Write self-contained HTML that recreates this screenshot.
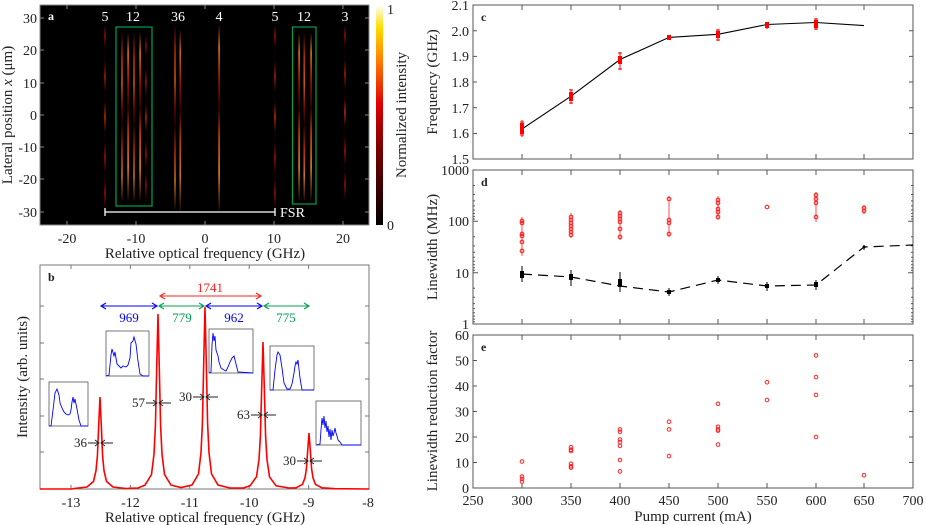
<!DOCTYPE html>
<html><head><meta charset="utf-8"><style>
html,body{margin:0;padding:0;background:#fff;}
svg{display:block;font-family:"Liberation Serif",serif;}
</style></head><body>
<svg width="926" height="525" viewBox="0 0 926 525" xmlns="http://www.w3.org/2000/svg">
<defs>
<linearGradient id="cb" x1="0" y1="1" x2="0" y2="0">
<stop offset="0" stop-color="#000"/><stop offset="0.35" stop-color="#7a0000"/><stop offset="0.55" stop-color="#e00000"/><stop offset="0.75" stop-color="#ff8000"/><stop offset="0.9" stop-color="#ffe000"/><stop offset="1" stop-color="#fff"/>
</linearGradient>
<linearGradient id="s1" x1="0" y1="0" x2="0" y2="1">
<stop offset="0" stop-color="#000"/><stop offset="0.06" stop-color="#b01000"/><stop offset="0.12" stop-color="#100"/><stop offset="0.2" stop-color="#100"/><stop offset="0.28" stop-color="#c02000"/><stop offset="0.36" stop-color="#100"/><stop offset="0.42" stop-color="#100"/><stop offset="0.5" stop-color="#d83000"/><stop offset="0.58" stop-color="#100"/><stop offset="0.64" stop-color="#100"/><stop offset="0.72" stop-color="#c01000"/><stop offset="0.8" stop-color="#100"/><stop offset="0.84" stop-color="#100"/><stop offset="0.91" stop-color="#b01000"/><stop offset="1" stop-color="#000"/>
</linearGradient>
<linearGradient id="s2" x1="0" y1="0" x2="0" y2="1">
<stop offset="0" stop-color="#100"/><stop offset="0.15" stop-color="#d03000"/><stop offset="0.3" stop-color="#e06010"/><stop offset="0.45" stop-color="#800000"/><stop offset="0.55" stop-color="#200"/><stop offset="0.7" stop-color="#d03000"/><stop offset="0.85" stop-color="#e08020"/><stop offset="1" stop-color="#200"/>
</linearGradient>
<linearGradient id="s3" x1="0" y1="0" x2="0" y2="1">
<stop offset="0" stop-color="#100"/><stop offset="0.12" stop-color="#e07010"/><stop offset="0.3" stop-color="#a01000"/><stop offset="0.45" stop-color="#300"/><stop offset="0.6" stop-color="#d04000"/><stop offset="0.8" stop-color="#e08020"/><stop offset="1" stop-color="#100"/>
</linearGradient>
</defs>

<!-- ===== Panel a ===== -->
<rect x="40" y="5" width="329" height="220" fill="#000"/>
<g>
<rect x="104.3" y="25" width="1.4" height="184" fill="url(#s1)"/>
<rect x="121.3" y="33" width="1.4" height="168" fill="url(#s2)"/>
<rect x="127.3" y="33" width="1.6" height="168" fill="url(#s3)"/>
<rect x="133.3" y="33" width="1.4" height="168" fill="url(#s2)"/>
<rect x="139.3" y="33" width="1.6" height="168" fill="url(#s3)"/>
<rect x="145.3" y="36" width="1.3" height="164" fill="url(#s1)"/>
<rect x="174.3" y="25" width="1.4" height="184" fill="url(#s2)"/>
<rect x="179.5" y="30" width="1.4" height="182" fill="url(#s3)"/>
<rect x="218.3" y="25" width="1.6" height="186" fill="url(#s3)"/>
<rect x="274.3" y="25" width="1.4" height="184" fill="url(#s1)"/>
<rect x="298.3" y="33" width="1.6" height="168" fill="url(#s3)"/>
<rect x="303.5" y="33" width="1.4" height="168" fill="url(#s2)"/>
<rect x="310.3" y="33" width="1.6" height="168" fill="url(#s3)"/>
<rect x="344.3" y="25" width="1.4" height="175" fill="url(#s1)"/>
</g>
<rect x="116" y="27" width="36" height="179" fill="none" stroke="#00a050" stroke-width="1.2"/>
<rect x="292.5" y="27" width="23.5" height="177" fill="none" stroke="#00a050" stroke-width="1.2"/>
<path d="M105,212 H275 M105,208 V216 M275,208 V216" stroke="#fff" stroke-width="1.3" fill="none"/>
<text x="280" y="217" font-size="14" fill="#fff">FSR</text>
<g font-size="14" fill="#fff" text-anchor="middle">
<text x="105" y="21">5</text><text x="133" y="21">12</text><text x="178" y="21">36</text><text x="219" y="21">4</text><text x="275" y="21">5</text><text x="304" y="21">12</text><text x="345" y="21">3</text>
</g>
<text x="48" y="20" font-size="12" font-weight="bold" fill="#fff">a</text>
<rect x="40" y="5" width="329" height="220" fill="none" stroke="#888" stroke-width="1"/>
<g stroke="#888" stroke-width="1">
<path d="M40,18h4M40,50h4M40,83h4M40,115h4M40,147h4M40,179h4M40,212h4M369,18h-4M369,50h-4M369,83h-4M369,115h-4M369,147h-4M369,179h-4M369,212h-4"/>
<path d="M67,225v-4M136,225v-4M205,225v-4M274,225v-4M343,225v-4M67,5v4M136,5v4M205,5v4M274,5v4M343,5v4"/>
</g>
<g font-size="14" fill="#222" text-anchor="end">
<text x="37" y="23">30</text><text x="37" y="55">20</text><text x="37" y="88">10</text><text x="37" y="120">0</text><text x="37" y="152">-10</text><text x="37" y="184">-20</text><text x="37" y="217">-30</text>
</g>
<g font-size="14" fill="#222" text-anchor="middle">
<text x="67" y="243">-20</text><text x="136" y="243">-10</text><text x="205" y="243">0</text><text x="274" y="243">10</text><text x="343" y="243">20</text>
<text x="205" y="258" font-size="15">Relative optical frequency (GHz)</text>
</g>
<text transform="translate(12,115) rotate(-90)" font-size="15" fill="#222" text-anchor="middle">Lateral position <tspan font-style="italic">x</tspan> (μm)</text>
<rect x="376" y="5" width="7" height="220" fill="url(#cb)"/>
<text x="387" y="14" font-size="14" fill="#222">1</text>
<text x="387" y="230" font-size="14" fill="#222">0</text>
<text transform="translate(406,115) rotate(-90)" font-size="15" fill="#222" text-anchor="middle">Normalized intensity</text>

<!-- ===== Panel b ===== -->
<rect x="40" y="265" width="329" height="224" fill="none" stroke="#777" stroke-width="1"/>
<g stroke="#777" stroke-width="1">
<path d="M40,306h4M40,343h4M40,379h4M40,416h4M40,452h4M369,306h-4M369,343h-4M369,379h-4M369,416h-4M369,452h-4"/>
<path d="M71,489v-4M130.4,489v-4M189.8,489v-4M249.2,489v-4M308.6,489v-4M71,265v4M130.4,265v4M189.8,265v4M249.2,265v4M308.6,265v4"/>
</g>
<text x="48" y="281" font-size="12" font-weight="bold" fill="#222">b</text>
<path fill="none" stroke="#ff0000" stroke-width="1.6" d="M40,489 H72 L74,488.5 L87,487 L93.5,481.4 L96,470.6 L97.4,456 L98.7,425.5 L100,397 L101.3,425.5 L102.6,456 L104,470.6 L106.5,481.4 L113,487 L126,488.5 L138,488 L145,485.1 L151.5,474.5 L154,454 L155.4,426 L156.7,368 L158,314 L159.3,368 L160.6,426 L162,454 L164.5,474.5 L171,485.1 L181,487.5 L192,485 L198.5,473.9 L201,452.6 L202.4,423.5 L203.7,363.4 L205,307 L206.3,363.4 L207.6,423.5 L209,452.6 L211.5,473.9 L218,485 L230,488 L243,488.1 L250,485.8 L256.5,476.8 L259,459.6 L260.4,436.1 L261.7,387.6 L263,342 L264.3,387.6 L265.6,436.1 L267,459.6 L269.5,476.8 L276,485.8 L289,488 L296,487.8 L302.5,484.4 L305,477.8 L306.4,468.8 L307.7,450.4 L309,433 L310.3,450.4 L311.6,468.8 L313,477.8 L315.5,484.4 L322,487.8 L335,488.7 L369,489"/>
<path d="M160,296 H261 M165,293 L160,296 L165,299 M256,293 L261,296 L256,299" stroke="#ff2020" stroke-width="1.1" fill="none"/>
<text x="210" y="292" font-size="13" fill="#ff2020" text-anchor="middle">1741</text>
<path d="M101,306 H157 M106,303 L101,306 L106,309 M152,303 L157,306 L152,309" stroke="#0000ff" stroke-width="1.1" fill="none"/>
<path d="M159,306 H204 M164,303 L159,306 L164,309 M199,303 L204,306 L199,309" stroke="#00a050" stroke-width="1.1" fill="none"/>
<path d="M206,306 H262 M211,303 L206,306 L211,309 M257,303 L262,306 L257,309" stroke="#0000ff" stroke-width="1.1" fill="none"/>
<path d="M264,306 H309 M269,303 L264,306 L269,309 M304,303 L309,306 L304,309" stroke="#00a050" stroke-width="1.1" fill="none"/>
<g font-size="13" text-anchor="middle">
<text x="129" y="322" fill="#0000ff">969</text><text x="182" y="322" fill="#00a050">779</text><text x="234" y="322" fill="#0000ff">962</text><text x="286" y="322" fill="#00a050">775</text>
</g>
<g stroke="#222" stroke-width="1" fill="none">
<path d="M88,443 H99 M95,440 L99,443 L95,446 M113,443 H101 M105,440 L101,443 L105,446"/>
<path d="M146,403 H157 M153,400 L157,403 L153,406 M171,403 H159 M163,400 L159,403 L163,406"/>
<path d="M193,397 H204 M200,394 L204,397 L200,400 M218,397 H206 M210,394 L206,397 L210,400"/>
<path d="M251,415 H262 M258,412 L262,415 L258,418 M276,415 H264 M268,412 L264,415 L268,418"/>
<path d="M297,461 H308 M304,458 L308,461 L304,464 M322,461 H310 M314,458 L310,461 L314,464"/>
</g>
<g font-size="13" fill="#222" text-anchor="end">
<text x="87" y="447">36</text><text x="145" y="407">57</text><text x="192" y="401">30</text><text x="250" y="419">63</text><text x="296" y="465">30</text>
</g>
<g fill="#fff" stroke="#555" stroke-width="0.8">
<rect x="49" y="382" width="39" height="44"/>
<rect x="106" y="331" width="43" height="45"/>
<rect x="209" y="329" width="44" height="44"/>
<rect x="270" y="346" width="44" height="44"/>
<rect x="316" y="401" width="45" height="44"/>
</g>
<g fill="none" stroke="#0000ff" stroke-width="0.9">
<polyline points="49,426 51,426 53,410 55,393 57,389 59,395 60,403 62,408 64,412 66,414 68,415 70,414 71,410 72,402 73,397 74,403 75,399 77,409 79,420 81,426 88,426"/>
<polyline points="106,376 109,375 111,355 112,349 114,356 115,352 117,364 119,366 121,368 123,366 126,367 128,365 130,358 131,343 133,341 134,337 136,344 138,361 140,374 143,376 149,376"/>
<polyline points="209,373 211,372 212,345 213,333 214,341 215,336 216,350 218,356 219,362 221,368 224,370 226,371 228,367 230,362 232,358 234,356 236,364 238,372 253,373"/>
<polyline points="270,390 273,390 275,370 277,355 278,352 280,355 282,368 284,383 287,389 290,389 292,384 294,373 295,366 296,362 297,364 298,360 299,369 300,378 302,390 314,390"/>
<polyline points="316,445 320,444 321,430 322,418 323,425 324,416 325,428 326,421 327,432 328,426 329,437 330,429 331,440 332,430 333,436 334,433 335,428 336,433 337,436 338,440 340,442 342,445 361,445"/>
</g>
<g font-size="14" fill="#222" text-anchor="middle">
<text x="71" y="507">-13</text><text x="130.4" y="507">-12</text><text x="189.8" y="507">-11</text><text x="249.2" y="507">-10</text><text x="308.6" y="507">-9</text><text x="368" y="507">-8</text>
<text x="205" y="522" font-size="15">Relative optical frequency (GHz)</text>
</g>
<text transform="translate(27,377) rotate(-90)" font-size="15" fill="#222" text-anchor="middle">Intensity (arb. units)</text>

<!-- ===== Panel c ===== -->
<rect x="473" y="5" width="440" height="154" fill="none" stroke="#555" stroke-width="1"/>
<g stroke="#555" stroke-width="1">
<path d="M473,30.7h4M473,56.4h4M473,82h4M473,107.8h4M473,133.5h4M913,30.7h-4M913,56.4h-4M913,82h-4M913,107.8h-4M913,133.5h-4"/>
<path d="M522,159v-5M571,159v-5M620,159v-5M669,159v-5M718,159v-5M767,159v-5M816,159v-5M864,159v-5M522,5v5M571,5v5M620,5v5M669,5v5M718,5v5M767,5v5M816,5v5M864,5v5"/>
</g>
<text x="481" y="21" font-size="12" font-weight="bold" fill="#222">c</text>
<polyline points="522,129 571,96.2 620,59.5 669,37.4 718,34.3 767,24.5 816,22.5 864,25.6" fill="none" stroke="#000" stroke-width="1.1"/>
<g stroke="#ff0000" stroke-width="1">
<path d="M522,120V137M520,122h4M520,135h4M571,89V104M569,90h4M569,103h4M620,52V70M618,53h4M618,69h4M669,35V40M718,29V41M716,30h4M716,40h4M767,22V29M816,18V30M814,19h4M814,29h4"/>
</g>
<g fill="#ff0000">
<rect x="520" y="123" width="4" height="11"/><rect x="569" y="92" width="4" height="9"/><rect x="618" y="56" width="4" height="8"/><rect x="667" y="35" width="4" height="5"/><rect x="716" y="31" width="4" height="7"/><rect x="765" y="22" width="4" height="6"/><rect x="814" y="20" width="4" height="8"/>
</g>
<g font-size="14" fill="#222" text-anchor="end">
<text x="469" y="10">2.1</text><text x="469" y="36">2.0</text><text x="469" y="61">1.9</text><text x="469" y="87">1.8</text><text x="469" y="113">1.7</text><text x="469" y="138">1.6</text><text x="469" y="164">1.5</text>
</g>
<text transform="translate(437,82) rotate(-90)" font-size="15" fill="#222" text-anchor="middle">Frequency (GHz)</text>

<!-- ===== Panel d ===== -->
<rect x="473" y="170" width="440" height="154" fill="none" stroke="#555" stroke-width="1"/>
<g stroke="#555" stroke-width="1">
<path d="M473,221.3h5M473,272.7h5M913,221.3h-5M913,272.7h-5"/>
<path d="M473,185.5h2M473,194.5h2M473,200.9h2M473,205.9h2M473,210h2M473,213.4h2M473,216.4h2M473,219h2M473,236.8h2M473,245.9h2M473,252.3h2M473,257.3h2M473,261.3h2M473,264.8h2M473,267.7h2M473,270.3h2M473,288.2h2M473,297.2h2M473,303.6h2M473,308.6h2M473,312.7h2M473,316.1h2M473,319.1h2M473,321.7h2"/>
<path d="M913,185.5h-2M913,194.5h-2M913,200.9h-2M913,205.9h-2M913,210h-2M913,213.4h-2M913,216.4h-2M913,219h-2M913,236.8h-2M913,245.9h-2M913,252.3h-2M913,257.3h-2M913,261.3h-2M913,264.8h-2M913,267.7h-2M913,270.3h-2M913,288.2h-2M913,297.2h-2M913,303.6h-2M913,308.6h-2M913,312.7h-2M913,316.1h-2M913,319.1h-2M913,321.7h-2"/>
<path d="M522,324v-5M571,324v-5M620,324v-5M669,324v-5M718,324v-5M767,324v-5M816,324v-5M864,324v-5M522,170v5M571,170v5M620,170v5M669,170v5M718,170v5M767,170v5M816,170v5M864,170v5"/>
</g>
<text x="481" y="186" font-size="12" font-weight="bold" fill="#222">d</text>
<polyline points="522,274 571,277 620,286 669,292 718,280 767,286 816,285 864,247 913,245" fill="none" stroke="#000" stroke-width="1.2" stroke-dasharray="10,6"/>
<g stroke="#000" stroke-width="1">
<path d="M522,266V282M571,270V286M620,272V292M669,288V296M718,276V284M767,282V291M816,280V290M864,245V250"/>
</g>
<g fill="#000"><rect x="520" y="271" width="4" height="7"/><rect x="569" y="274" width="4" height="6"/><rect x="618" y="279" width="4" height="8"/><rect x="667" y="290" width="4" height="4"/><rect x="716" y="278" width="4" height="4"/><rect x="765" y="284" width="4" height="4"/><rect x="814" y="282" width="4" height="5"/><circle cx="864" cy="247" r="1.5"/></g>
<g fill="none" stroke="#ff2020" stroke-width="1.1">
<circle cx="522" cy="221" r="1.8"/><circle cx="522" cy="223" r="1.8"/><circle cx="522" cy="234" r="1.8"/><circle cx="522" cy="236" r="1.8"/><circle cx="522" cy="242" r="1.8"/><circle cx="522" cy="251" r="1.8"/>
<circle cx="571" cy="217" r="1.8"/><circle cx="571" cy="220" r="1.8"/><circle cx="571" cy="223" r="1.8"/><circle cx="571" cy="226" r="1.8"/><circle cx="571" cy="229" r="1.8"/><circle cx="571" cy="232" r="1.8"/><circle cx="571" cy="235" r="1.8"/>
<circle cx="620" cy="213" r="1.8"/><circle cx="620" cy="216" r="1.8"/><circle cx="620" cy="219" r="1.8"/><circle cx="620" cy="222" r="1.8"/><circle cx="620" cy="229" r="1.8"/><circle cx="620" cy="237" r="1.8"/>
<circle cx="669" cy="199" r="1.8"/><circle cx="669" cy="220" r="1.8"/><circle cx="669" cy="223" r="1.8"/><circle cx="669" cy="234" r="1.8"/>
<circle cx="718" cy="200" r="1.8"/><circle cx="718" cy="203" r="1.8"/><circle cx="718" cy="209" r="1.8"/><circle cx="718" cy="212" r="1.8"/><circle cx="718" cy="217" r="1.8"/>
<circle cx="767" cy="207" r="1.8"/>
<circle cx="816" cy="195" r="1.8"/><circle cx="816" cy="199" r="1.8"/><circle cx="816" cy="203" r="1.8"/><circle cx="816" cy="217" r="1.8"/>
<circle cx="864" cy="208" r="1.8"/><circle cx="864" cy="211" r="1.8"/>
</g>
<g stroke="#ff2020" stroke-width="0.8"><path d="M522,217V256M571,213V238M620,210V240M669,196V237M718,196V220M816,192V222M864,205V214"/></g>
<g font-size="14" fill="#222" text-anchor="end">
<text x="469" y="175">1000</text><text x="469" y="226">100</text><text x="469" y="278">10</text><text x="469" y="329">1</text>
</g>
<text transform="translate(437,247) rotate(-90)" font-size="15" fill="#222" text-anchor="middle">Linewidth (MHz)</text>

<!-- ===== Panel e ===== -->
<rect x="473" y="335" width="440" height="153" fill="none" stroke="#555" stroke-width="1"/>
<g stroke="#555" stroke-width="1">
<path d="M473,360.5h4M473,386h4M473,411.5h4M473,437h4M473,462.5h4M913,360.5h-4M913,386h-4M913,411.5h-4M913,437h-4M913,462.5h-4"/>
<path d="M522,488v-5M571,488v-5M620,488v-5M669,488v-5M718,488v-5M767,488v-5M816,488v-5M864,488v-5M522,335v5M571,335v5M620,335v5M669,335v5M718,335v5M767,335v5M816,335v5M864,335v5"/>
</g>
<text x="481" y="351" font-size="12" font-weight="bold" fill="#222">e</text>
<g fill="none" stroke="#ff2020" stroke-width="1">
<circle cx="522" cy="461.5" r="1.8"/><circle cx="522" cy="476.5" r="1.8"/><circle cx="522" cy="479" r="1.8"/><circle cx="522" cy="481.6" r="1.8"/>
<circle cx="571" cy="447.2" r="1.8"/><circle cx="571" cy="449.7" r="1.8"/><circle cx="571" cy="451" r="1.8"/><circle cx="571" cy="463.8" r="1.8"/><circle cx="571" cy="466.3" r="1.8"/><circle cx="571" cy="467.6" r="1.8"/>
<circle cx="620" cy="429.4" r="1.8"/><circle cx="620" cy="431.9" r="1.8"/><circle cx="620" cy="439.5" r="1.8"/><circle cx="620" cy="442.1" r="1.8"/><circle cx="620" cy="445.9" r="1.8"/><circle cx="620" cy="460" r="1.8"/><circle cx="620" cy="471.4" r="1.8"/>
<circle cx="669" cy="421.7" r="1.8"/><circle cx="669" cy="429.4" r="1.8"/><circle cx="669" cy="456.1" r="1.8"/>
<circle cx="718" cy="403.8" r="1.8"/><circle cx="718" cy="426.8" r="1.8"/><circle cx="718" cy="429.4" r="1.8"/><circle cx="718" cy="430.6" r="1.8"/><circle cx="718" cy="444.6" r="1.8"/>
<circle cx="767" cy="382.2" r="1.8"/><circle cx="767" cy="400" r="1.8"/>
<circle cx="816" cy="355.4" r="1.8"/><circle cx="816" cy="377.1" r="1.8"/><circle cx="816" cy="394.9" r="1.8"/><circle cx="816" cy="437" r="1.8"/>
<circle cx="864" cy="475.2" r="1.8"/>
</g>
<g font-size="14" fill="#222" text-anchor="end">
<text x="469" y="340">60</text><text x="469" y="365.5">50</text><text x="469" y="391">40</text><text x="469" y="416.5">30</text><text x="469" y="442">20</text><text x="469" y="467.5">10</text><text x="469" y="493">0</text>
</g>
<g font-size="14" fill="#222" text-anchor="middle">
<text x="473" y="505">250</text><text x="522" y="505">300</text><text x="571" y="505">350</text><text x="620" y="505">400</text><text x="669" y="505">450</text><text x="718" y="505">500</text><text x="767" y="505">550</text><text x="816" y="505">600</text><text x="864" y="505">650</text><text x="913" y="505">700</text>
<text x="693" y="521" font-size="15">Pump current (mA)</text>
</g>
<text transform="translate(437,411) rotate(-90)" font-size="15" fill="#222" text-anchor="middle">Linewidth reduction factor</text>
</svg>
</body></html>
